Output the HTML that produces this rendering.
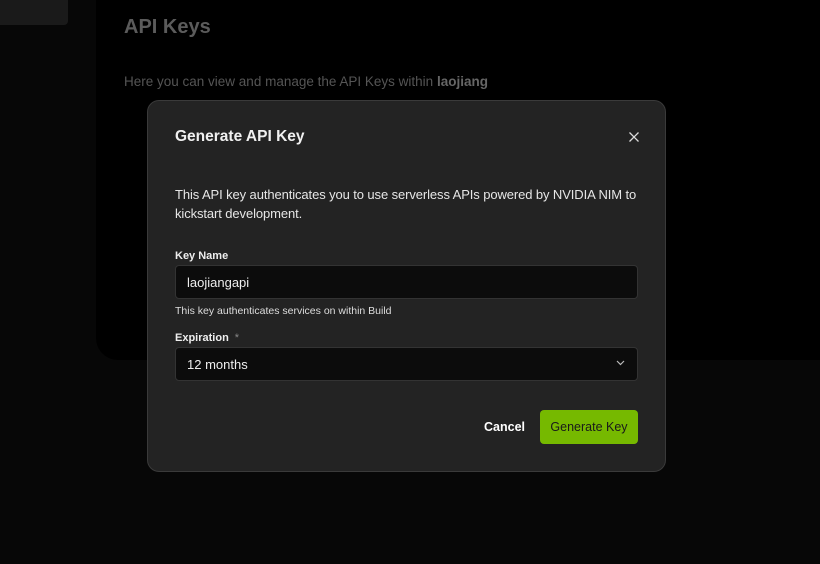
<!DOCTYPE html>
<html><head><style>
*{box-sizing:border-box;margin:0;padding:0}
body{width:820px;height:564px;background:#070707;font-family:"Liberation Sans",sans-serif;position:relative;overflow:hidden}
.tl{position:absolute;left:0;top:0;width:68px;height:25px;background:#1a1a1a;border-radius:0 0 4px 0}
.panel{position:absolute;left:96px;top:-20px;width:760px;height:380px;background:#000;border-radius:22px}
.h1{position:absolute;left:124px;top:16px;font-size:20px;font-weight:bold;color:#5b5b5b}
.desc{position:absolute;left:124px;top:74px;font-size:13.5px;color:#555}
.desc b{color:#666}
.modal{position:absolute;left:147px;top:100px;width:519px;height:372px;background:#232323;border:1px solid #3a3a3a;border-radius:12px;color:#eee}
.title{position:absolute;left:27px;top:27px;font-size:15.5px;font-weight:bold;color:#f0f0f0}
.x{position:absolute;left:480px;top:30px}
.p{position:absolute;left:27px;top:84px;width:462px;font-size:13px;line-height:19px;color:#e6e6e6;letter-spacing:-0.1px}
.lbl{position:absolute;left:27px;font-size:11px;font-weight:bold;color:#eee}
.lbl span{color:#888;font-weight:normal;margin-left:6px}
.inp{position:absolute;left:27px;width:463px;height:34px;background:#0c0c0c;border:1px solid #333;border-radius:4px;font-size:13px;color:#eee;padding:9px 11px}
.hint{position:absolute;left:27px;top:204px;font-size:10.5px;color:#ddd}
.chev{position:absolute;right:12px;top:12px}
.cancel{position:absolute;left:336px;top:319px;font-size:12.5px;font-weight:bold;color:#fff}
.btn{position:absolute;left:392px;top:309px;width:98px;height:34px;background:#76b900;border-radius:4px;font-size:12.5px;color:#1a1a1a;text-align:center;line-height:34px}
</style></head><body>
<div class="tl"></div>
<div class="panel"></div>
<div class="h1">API Keys</div>
<div class="desc">Here you can view and manage the API Keys within <b>laojiang</b></div>
<div class="modal">
<div class="title">Generate API Key</div>
<svg class="x" width="12" height="12" viewBox="0 0 12 12"><path d="M1.5 1.5L10.5 10.5M10.5 1.5L1.5 10.5" stroke="#ddd" stroke-width="1.3"/></svg>
<div class="p">This API key authenticates you to use serverless APIs powered by NVIDIA NIM to kickstart development.</div>
<div class="lbl" style="top:149px">Key Name</div>
<div class="inp" style="top:164px">laojiangapi</div>
<div class="hint">This key authenticates services on within Build</div>
<div class="lbl" style="top:231px">Expiration<span>*</span></div>
<div class="inp" style="top:246px">12 months<svg class="chev" width="9" height="6" viewBox="0 0 9 6"><path d="M1 1L4.5 4.5L8 1" stroke="#bbb" stroke-width="1.2" fill="none"/></svg></div>
<div class="cancel">Cancel</div>
<div class="btn">Generate Key</div>
</div>
</body></html>
